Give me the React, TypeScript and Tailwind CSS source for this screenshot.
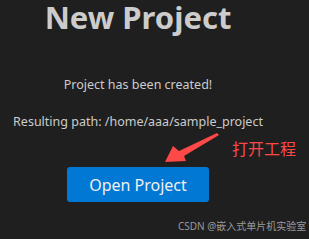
import React from 'react';

const font = { fontFamily: '"Noto Sans", "Open Sans", sans-serif' };

export default function App() {
  return (
    <div className="relative h-[239px] w-[309px] overflow-hidden bg-[#1f1f1f] text-[#cccccc]" style={font}>
      <div className="flex w-[276px] flex-col items-center text-center">
        <h1 className="text-[31px] font-bold leading-[34px] text-[#cccccc]">New Project</h1>
        <p className="mt-[42px] text-[12.5px] leading-[18px]">Project has been created!</p>
        <p className="mt-[19px] text-[12.5px] leading-[18px]">Resulting path: /home/aaa/sample_project</p>
        <button className="mt-[36px] h-[35px] w-[142px] rounded-[3px] bg-[#0078d4] text-[16px] text-[#f0f0f0]">
          Open Project
        </button>
      </div>

      {/* annotation overlay */}
      <svg className="absolute left-0 top-0" width="309" height="239" viewBox="0 0 309 239">
        <polygon
          points="165,162 173,146 179,151 217,133 219,135 184,156 186,161"
          fill="#ff4848"
        />
      </svg>
      <span
        className="absolute left-[232px] top-[138px] text-[16px] leading-[20px] text-[#ff4848]"
        style={{ fontFamily: '"Noto Sans CJK SC", sans-serif' }}
      >
        打开工程
      </span>
      <span
        className="absolute left-[178px] top-[219px] whitespace-nowrap text-[10px] leading-[14px] text-[#9a9a9a]"
        style={{ fontFamily: '"Noto Sans", "Noto Sans CJK SC", sans-serif' }}
      >
        CSDN @嵌入式单片机实验室
      </span>
    </div>
  );
}
